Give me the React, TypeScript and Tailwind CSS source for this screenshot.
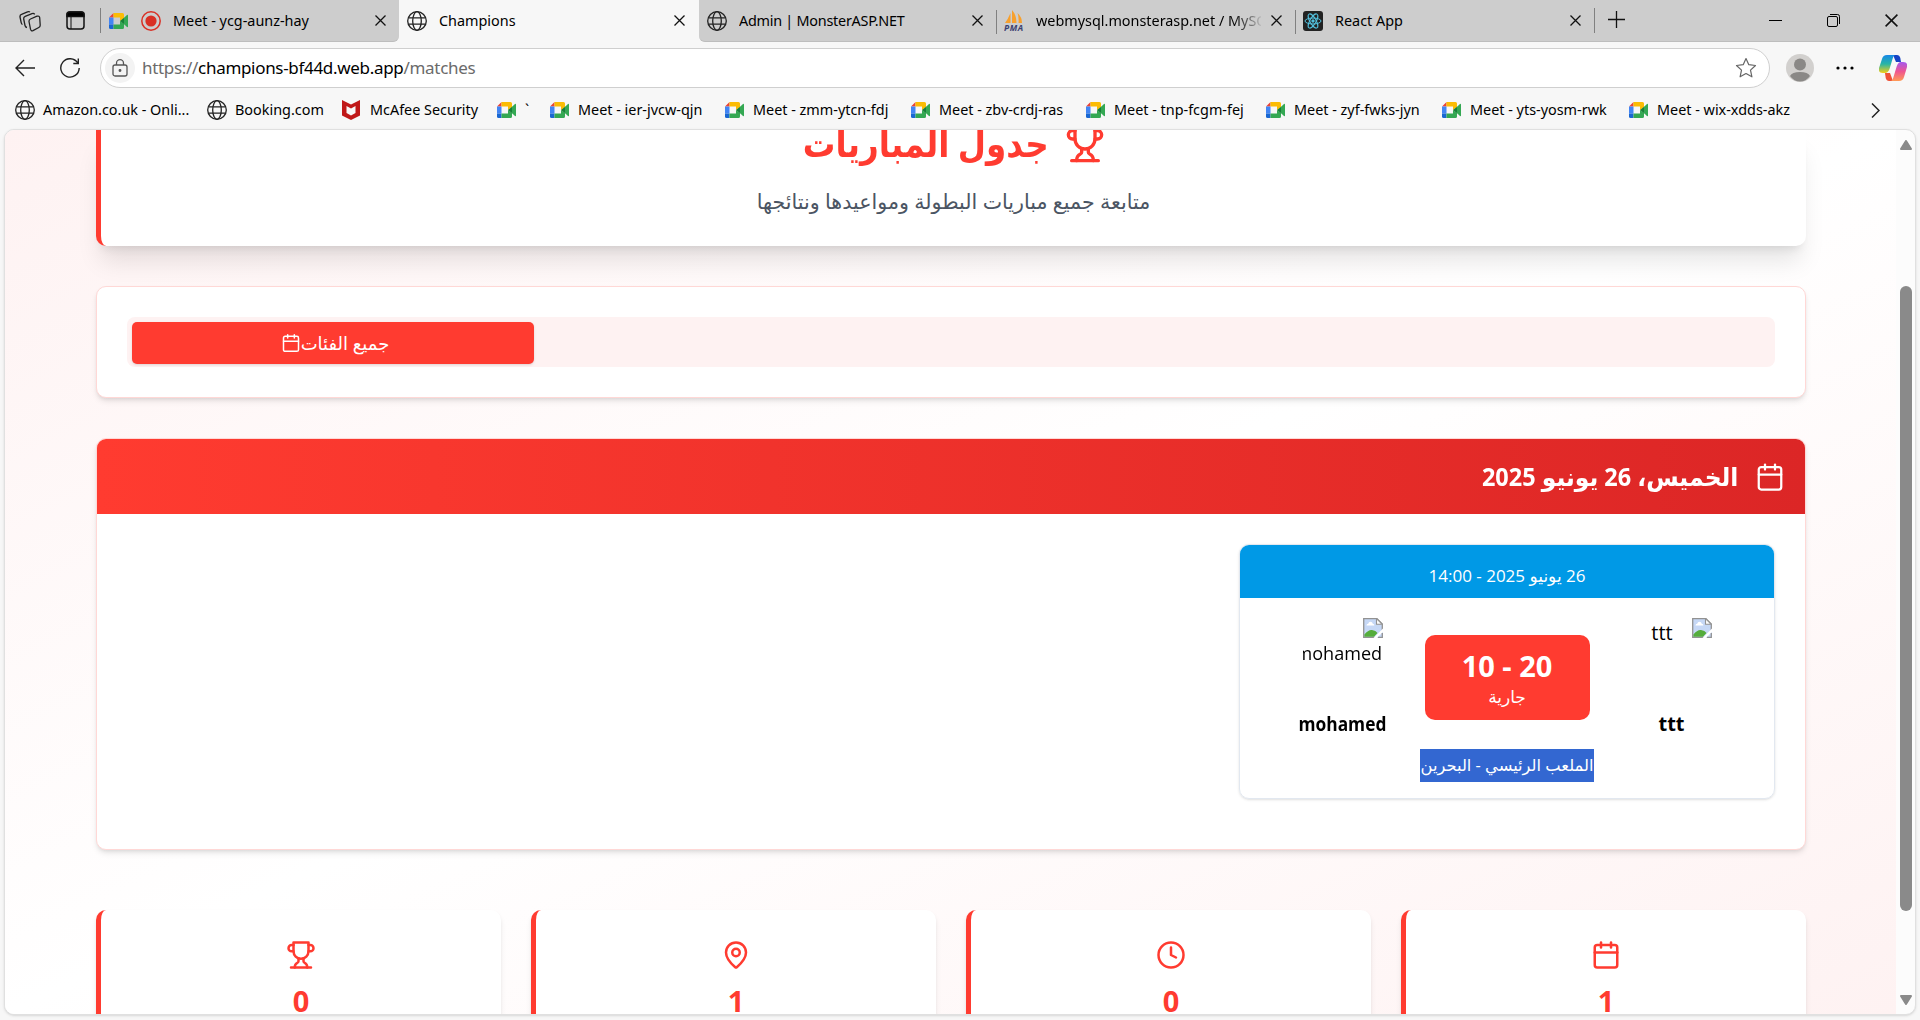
import React from 'react';
import { Calendar, MapPin, Clock } from 'lucide-react';

const ui = "font-['Noto_Sans','Open_Sans',sans-serif]";

function Globe({ c = 'w-5 h-5' }: { c?: string }) {
  return (
    <svg className={`${c} shrink-0`} viewBox="0 0 20 20" fill="none" stroke="#222" strokeWidth="1.3">
      <circle cx="10" cy="10" r="9.3" />
      <ellipse cx="10" cy="10" rx="4.3" ry="9.3" />
      <path d="M1.6 6.8h16.8M1.6 13.2h16.8" />
    </svg>
  );
}

function Trophy({ className }: { className: string }) {
  return (
    <svg className={className} viewBox="0 0 24 24" fill="none" stroke="currentColor" strokeWidth="2" strokeLinecap="round" strokeLinejoin="round">
      <path d="M6 9H4.500a2.500 2.500 0 0 1 0-5H6M18 9h1.500a2.500 2.500 0 0 0 0-5H18M4 22h16" />
      <path d="M10 14.660V17c0 .55-.47.98-.97 1.210C7.850 18.750 7 20.240 7 22M14 14.660V17c0 .55.47.98.97 1.210C16.150 18.750 17 20.240 17 22" />
      <path d="M18 2H6v7a6 6 0 0 0 12 0V2Z" />
    </svg>
  );
}

function Meet() {
  return (
    <svg className="w-[19px] h-[16px] shrink-0" viewBox="0 0 19 16">
      <path d="M0 4.5 4.5 0v4.5z" fill="#ea4335" />
      <path d="M0 4.5h4.5v7H0z" fill="#4285f4" />
      <path d="M0 11.5h4.5V16H1.5Q0 16 0 14.5z" fill="#1967d2" />
      <path d="M4.5 0H13.5Q15 0 15 1.5V5l-4 3V4.5H4.500z" fill="#fbbc04" />
      <path d="M4.500 11.500H11V8l4 3v3.500Q15 16 13.500 16h-9z" fill="#34a853" />
      <path d="M11 8 15 4.700v6.600z" fill="#188038" />
      <path d="M15 4.700 18 2Q19 1.500 19 2.500v11q0 1-1 .5L15 11.300z" fill="#34a853" />
    </svg>
  );
}

function X({ s = 'w-[11px] h-[11px]' }: { s?: string }) {
  return (
    <svg className={`${s} shrink-0`} viewBox="0 0 11 11" stroke="#111" strokeWidth="1.3">
      <path d="M.5.5l10 10M10.500.5l-10 10" />
    </svg>
  );
}

function Tab({ icon, title, w, sep }: { icon: React.ReactNode; title: React.ReactNode; w: string; sep?: boolean }) {
  return (
    <div className={`${w} h-[41px] shrink-0 flex items-center pr-[13px] relative`}>
      {sep && <span className="absolute left-0 top-[10px] w-px h-[24px] bg-[#808080]" />}
      <span className="w-[40px] shrink-0 pl-[8px]">{icon}</span>
      <span className="flex-1 overflow-hidden whitespace-nowrap">{title}</span>
      <span className="pl-[10px]"><X /></span>
    </div>
  );
}

function Bookmark({ icon, label, w }: { icon: React.ReactNode; label: string; w: string }) {
  return (
    <div className={`${w} shrink-0 flex items-center whitespace-nowrap`}>
      <span className="w-[28px] shrink-0 flex">{icon}</span>
      <span>{label}</span>
    </div>
  );
}

function Broken() {
  return (
    <svg className="w-[20px] h-[20px] shrink-0" viewBox="0 0 20 20">
      <path d="M.7.700H14L19.300 6V19.300H.7z" fill="#c6d8f6" stroke="#929292" strokeWidth="1.300" />
      <path d="M13.500.7V6.300H19.300z" fill="#fff" stroke="#929292" strokeWidth="1.100" />
      <path d="M3.500 7.500q0-1.800 1.700-1.800.5-1.900 2.300-1.900t2.300 1.900q1.600.2 1.600 1.800z" fill="#fff" />
      <path d="M1.400 18.700v-2.200q4-5 7.600-4.500 4 .5 5.500 3L11 18.700z" fill="#55ad3c" />
      <path d="M20 10.500 10.500 20h4l5.500-5.500z" fill="#fff" />
      <path d="M20 14 14 20h6z" fill="#c6d8f6" /><path d="M19.300 15v4.300H15" fill="none" stroke="#929292" strokeWidth="1.300" />
    </svg>
  );
}

function Stat({ icon, n }: { icon: React.ReactNode; n: string }) {
  return (
    <div className="h-[160px] bg-white rounded-[10px] border-l-[5px] border-[#ff3b30] shadow-md flex flex-col items-center pt-[30px] text-[#ff3b30]">
      {icon}
      <span className="mt-[9px] text-[29px] leading-[44px] font-bold">{n}</span>
    </div>
  );
}

const bookmarks = [
  ['Meet - ier-jvcw-qjn', 'w-[175px]'],
  ['Meet - zmm-ytcn-fdj', 'w-[186px]'],
  ['Meet - zbv-crdj-ras', 'w-[175px]'],
  ['Meet - tnp-fcgm-fej', 'w-[180px]'],
  ['Meet - zyf-fwks-jyn', 'w-[176px]'],
  ['Meet - yts-yosm-rwk', 'w-[187px]'],
  ['Meet - wix-xdds-akz', 'w-[180px]'],
];

export default function App() {
  return (
    <div className={`w-[1920px] h-[1020px] overflow-hidden bg-[#f7f7f7] flex flex-col text-black ${ui}`}>
      <div className="h-[43px] shrink-0 bg-[#f7f7f7] flex text-[14.400px]">
        <div className="w-[399px] h-[42px] bg-[#cdcdcd] border-b border-[#bdbdbd] rounded-br-[6px] flex items-center shrink-0">
          <svg className="w-[22px] h-[22px] ml-[19px]" viewBox="0 0 22 22" fill="none" stroke="#222" strokeWidth="1.300" strokeLinejoin="round">
            <path d="M11.500 9 18 6.200q2.300-.7 2.700 1.500l.5 7.500q0 1.600-1.400 2.300L14 20.600q-2 .7-2.500-1.400L10 11.500q-.2-1.800 1.500-2.500z" />
            <path d="M8 17.500q-1.600-.2-2-2L4.700 9q-.3-2 1.500-2.700L13 3.600q1.800-.6 2.700.8" />
            <path d="M3.500 14.500q-1-.3-1.300-1.800L1 7q-.3-2 1.500-2.700L8.500 1.800q1.600-.5 2.500.3" />
          </svg>
          <svg className="w-[19px] h-[19px] ml-[25px]" viewBox="0 0 19 19" fill="none" stroke="#111" strokeWidth="1.500">
            <rect x="1" y="1" width="17" height="17" rx="3" /><path d="M1 3.500q0-2.500 2.500-2.500h12q2.500 0 2.500 2.500V5.500H1z" fill="#000" /><path d="M5 6v12" strokeWidth="1" />
          </svg>
          <span className="w-px h-[25px] bg-[#808080] ml-[15px] mr-[8px]" />
          <Meet />
          <svg className="w-[20px] h-[20px] ml-[13px] mr-[12px]" viewBox="0 0 20 20"><circle cx="10" cy="10" r="9.200" fill="none" stroke="#d93025" strokeWidth="1.500" /><circle cx="10" cy="10" r="5.600" fill="#d93025" /></svg>
          <span className="flex-1">Meet - ycg-aunz-hay</span>
          <span className="pr-[13px]"><X /></span>
        </div>
        <div className="w-[300px] bg-[#f7f7f7] shrink-0"><Tab icon={<Globe />} title="Champions" w="w-[299px]" /></div>
        <div className="flex-1 h-[42px] bg-[#cdcdcd] border-b border-[#bdbdbd] rounded-bl-[6px] flex items-center">
          <Tab icon={<Globe />} title={<span className="tracking-[-0.25px]">Admin | MonsterASP.NET</span>} w="w-[297px]" />
          <Tab sep icon={
            <svg className="w-[20px] h-[22px]" viewBox="0 0 20 22"><path d="M6.500 3v10H1q3-4 5.500-10zM8 0q4.500 5 4.500 13H8zM13.500 3q4.500 4 4.500 10h-3.500q.5-6-1-10z" fill="#f8a02c" /><text x="0" y="21" fontSize="8.500" fontWeight="bold" fontStyle="italic" fill="#3b4170" textLength="19">PMA</text></svg>
          } title={<span className="block bg-linear-to-r from-black from-85% to-[#bbb] bg-clip-text text-transparent">webmysql.monsterasp.net / MySQL</span>} w="w-[299px]" />
          <Tab sep icon={
            <svg className="w-[20px] h-[20px]" viewBox="0 0 20 20" fill="none" stroke="#53c1de"><rect width="20" height="20" rx="3" fill="#222" stroke="none" /><ellipse cx="10" cy="10" rx="8" ry="3" /><ellipse cx="10" cy="10" rx="8" ry="3" transform="rotate(60 10 10)" /><ellipse cx="10" cy="10" rx="8" ry="3" transform="rotate(120 10 10)" /><circle cx="10" cy="10" r="1.200" fill="#53c1de" /></svg>
          } title="React App" w="w-[299px]" />
          <span className="w-px h-[25px] bg-[#808080]" />
          <svg className="w-[17px] h-[17px] ml-[13px] -mt-[2px]" viewBox="0 0 17 17" stroke="#111" strokeWidth="1.300"><path d="M8.500 0v17M0 8.500h17" /></svg>
          <div className="flex-1 flex items-center justify-end pr-[22px]">
            <span className="w-[13px] h-px bg-black" />
            <svg className="w-[13px] h-[13px] ml-[45px] mr-[45px]" viewBox="0 0 13 13" fill="none" stroke="#000"><rect x=".5" y="2.500" width="10" height="10" rx="1.500" /><path d="M3 .5h7.500q2 0 2 2V10" /></svg>
            <X s="w-[13px] h-[13px]" />
          </div>
        </div>
      </div>

      <div className="h-[50px] shrink-0 flex items-center">
        <svg className="w-[20px] h-[18px] ml-[15px]" viewBox="0 0 20 18" fill="none" stroke="#222" strokeWidth="1.400"><path d="M20 9H1M9 1 1 9l8 8" /></svg>
        <svg className="w-[20px] h-[20px] ml-[25px]" viewBox="0 0 20 20" fill="none" stroke="#222" strokeWidth="1.400"><path d="M17.800 5A9.200 9.200 0 1 0 19.200 10M18.300.5v5h-5" /></svg>
        <div className="ml-[20px] w-[1670px] h-[40px] rounded-full bg-white border border-[#cfcfcf] flex items-center px-[4px]">
          <span className="w-[30px] h-[30px] rounded-full bg-[#f3f3f3] flex items-center justify-center">
            <svg className="w-[16px] h-[18px]" viewBox="0 0 16 18" fill="none" stroke="#555" strokeWidth="1.300"><rect x="1" y="6" width="14" height="11" rx="2" /><path d="M4.500 6V4.200a3.500 3.500 0 0 1 7 0V6" /><circle cx="8" cy="11.500" r=".8" fill="#555" /></svg>
          </span>
          <span className="ml-[7px] text-[17px] tracking-[-0.310px] text-[#6b6b6b] whitespace-nowrap flex-1">https://<span className="text-black">champions-bf44d.web.app</span>/matches</span>
          <svg className="w-[22px] h-[22px] mr-[8px]" viewBox="0 0 22 22" fill="none" stroke="#666" strokeWidth="1.200" strokeLinejoin="round"><path d="m11 1.500 2.800 6.200 6.700.8-5 4.600 1.400 6.700-5.900-3.300-5.900 3.300 1.400-6.700-5-4.600 6.700-.8z" /></svg>
        </div>
        <svg className="w-[28px] h-[28px] ml-[16px]" viewBox="0 0 28 28"><circle cx="14" cy="14" r="14" fill="#d2d0ce" /><circle cx="14" cy="10.500" r="6" fill="#8a8886" /><path d="M4 22q2-4 10-4t10 4q-4 5.500-10 5.500T4 22" fill="#8a8886" /></svg>
        <svg className="w-[18px] h-[4px] ml-[22px]" viewBox="0 0 18 4"><circle cx="2" cy="2" r="1.600" /><circle cx="9" cy="2" r="1.600" /><circle cx="16" cy="2" r="1.600" /></svg>
        <svg className="w-[28px] h-[26px] ml-[25px]" viewBox="0 0 28 26">
          <defs>
            <linearGradient id="ca" x1="0" y1="0" x2="0" y2="1"><stop offset="0" stopColor="#1687e8" /><stop offset=".5" stopColor="#28b5a5" /><stop offset="1" stopColor="#f5cf16" /></linearGradient>
            <linearGradient id="cb" x1="0" y1="0" x2="0" y2="1"><stop offset="0" stopColor="#a459ee" /><stop offset=".5" stopColor="#ef5590" /><stop offset="1" stopColor="#ff9b55" /></linearGradient>
          </defs>
          <path d="M14 0h4q2.500 0 3.300 3L22 7h-5z" fill="#1743c5" /><path d="M8 0h8q-2 1-2.500 4l-3 10Q9 18 6 18H4q-5 0-4-5L3 4q1-4 5-4" fill="url(#ca)" />
          <path d="M14 26h-4q-2.500 0-3.300-3L6 18h5z" fill="#ef5238" /><path d="M20 26h-8q2-1 2.500-4l3-10Q19 7 22 7h2q5 0 4 5l-3 10q-1 4-5 4" fill="url(#cb)" />
        </svg>
      </div>

      <div className="h-[36px] pb-[2px] shrink-0 flex items-center text-[14.400px] pl-[15px]">
        <Bookmark icon={<Globe />} label="Amazon.co.uk - Onli..." w="w-[192px]" />
        <Bookmark icon={<Globe />} label="Booking.com" w="w-[135px]" />
        <Bookmark icon={<svg className="w-[18px] h-[20px]" viewBox="0 0 18 20"><path d="M0 0 9 4.500 18 0v15.500L9 20 0 15.500zM4.500 6v7L9 15.500l4.500-2.500V6L9 8.500z" fill="#c01818" fillRule="evenodd" /></svg>} label="McAfee Security" w="w-[155px]" />
        <Bookmark icon={<Meet />} label="`" w="w-[53px]" />
        {bookmarks.map(([l, w]) => <Bookmark key={l} icon={<Meet />} label={l} w={w} />)}
        <svg className="w-[9px] h-[15px] ml-[62px]" viewBox="0 0 9 15" fill="none" stroke="#222" strokeWidth="1.500"><path d="m1 .5 7 7-7 7" /></svg>
      </div>

      <div className="ml-[4px] w-[1912px] h-[886px] shrink-0 rounded-[10px] border border-[#e0e0e0] overflow-hidden flex shadow-sm bg-[#fcfcfc]">
        <div className="w-[1891px] h-full overflow-hidden bg-linear-to-br from-[#fef2f2] via-white to-[#fef2f2] pl-[91px] font-['Open_Sans','DejaVu_Sans',sans-serif]">
          <div className="w-[1710px]">
            <div dir="rtl" className="h-[116px] bg-white rounded-b-[10px] border-l-[5px] border-[#ff3b30] shadow-xl flex flex-col items-center text-center">
              <div className="-mt-[16px] h-[60px] flex items-center gap-[16px] text-[#ff3b30]">
                <Trophy className="w-[40px] h-[40px]" />
                <h1 className="w-[246px] flex justify-center text-[37px] font-bold whitespace-nowrap"><span className="-mt-[2px] scale-x-[.88]">جدول المباريات</span></h1>
              </div>
              <p className="mt-[11px] text-[20.600px] leading-[32px] text-[#4b5563] whitespace-nowrap">متابعة جميع مباريات البطولة ومواعيدها ونتائجها</p>
            </div>

            <div className="mt-[40px] h-[112px] rounded-[10px] bg-white border border-[#ffd8d6] shadow-md p-[30px]">
              <div className="h-[50px] rounded-lg bg-[#fef2f2] p-[5px]">
                <button className="w-[402px] h-[42px] rounded-[5px] bg-[#ff3b30] text-white flex items-center justify-center pl-[4px] text-[18px] font-medium shadow-sm">
                  <Calendar className="w-5 h-5" strokeWidth={1.800} /><span dir="rtl">جميع الفئات</span>
                </button>
              </div>
            </div>

            <div dir="rtl" className="mt-[40px] h-[412px] rounded-[10px] bg-white border border-[#ffd8d6] shadow-md overflow-hidden">
              <div className="h-[75px] bg-linear-to-r from-[#ff3b30] to-[#dc2626] text-white flex items-center gap-[17px] pr-[20px]">
                <Calendar className="w-[30px] h-[30px]" strokeWidth={1.800} />
                <h2 className="origin-right scale-x-[.938] text-[25px] font-bold whitespace-nowrap">الخميس، 26 يونيو 2025</h2>
              </div>
              <div className="p-[30px]">
                <div className="w-[536px] h-[255px] rounded-[10px] border border-[#e2e8f0] shadow-sm overflow-hidden">
                  <div className="h-[53px] pt-[8px] bg-[#0099e6] text-white text-[17px] flex items-center justify-center">26 يونيو 2025 - 14:00</div>
                  <div className="h-[154px] flex justify-center pt-[20px] text-[20px] leading-[27px] text-black">
                    <div className="w-[120px] flex flex-col items-center">
                      <div className="h-[92px] flex items-start gap-[19px] pl-[20px]"><Broken /><span className="pt-[1px]">ttt</span></div>
                      <span className="font-bold text-[20px]">ttt</span>
                    </div>
                    <div className="w-[165px] h-[85px] mt-[17px] mx-[22px] rounded-[10px] bg-[#ff3b30] text-white flex flex-col items-center pt-[13px]">
                      <span className="text-[29px] leading-[36px] font-bold">20 - 10</span>
                      <span className="text-[17px] leading-[26px]">جارية</span>
                    </div>
                    <div className="w-[120px] flex flex-col items-center">
                      <div className="h-[92px] w-[80px] flex flex-col items-start overflow-hidden"><Broken /><span className="text-[19px] leading-[30px] origin-right scale-x-[.95]">mohamed</span></div>
                      <span className="font-bold text-[19.500px] scale-x-[.89]">mohamed</span>
                    </div>
                  </div>
                  <div className="text-center -mt-[3px]"><span className="inline-flex items-center justify-center w-[174px] h-[33px] bg-[#3367d1] text-white text-[16.300px] whitespace-nowrap">الملعب الرئيسي - البحرين</span></div>
                </div>
              </div>
            </div>

            <div className="mt-[60px] grid grid-cols-4 gap-[30px]">
              <Stat icon={<Trophy className="w-[30px] h-[30px]" />} n="0" />
              <Stat icon={<MapPin className="w-[30px] h-[30px]" />} n="1" />
              <Stat icon={<Clock className="w-[30px] h-[30px]" />} n="0" />
              <Stat icon={<Calendar className="w-[30px] h-[30px]" />} n="1" />
            </div>
          </div>
        </div>
        <div className="flex-1 flex flex-col items-center pt-[10px] pb-[9px]">
          <svg className="w-[12px] h-[10px]" viewBox="0 0 12 10"><path d="M6 1 11 9H1z" fill="#8a8a8a" stroke="#8a8a8a" strokeWidth="2" strokeLinejoin="round" /></svg>
          <div className="mt-[136px] w-[12px] h-[625px] rounded-full bg-[#8a8a8a]" />
          <svg className="mt-auto w-[12px] h-[10px]" viewBox="0 0 12 10"><path d="M6 9 11 1H1z" fill="#8a8a8a" stroke="#8a8a8a" strokeWidth="2" strokeLinejoin="round" /></svg>
        </div>
      </div>
    </div>
  );
}
